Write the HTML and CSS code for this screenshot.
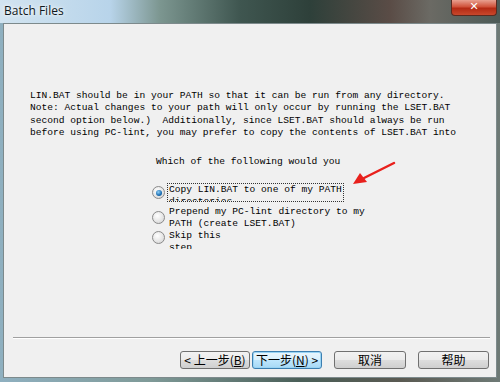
FILE: index.html
```html
<!DOCTYPE html>
<html>

<head>
    <meta charset="UTF-8">
    <title>Batch Files</title>
    <link rel="stylesheet" href="styles.css">
</head>

<body>
    <div class="window">
        <div class="titlebar">
            <span class="title">Batch Files</span>
            <span class="closeBtn">&#x2715;</span>
        </div>
        <div class="client">
            <div class="info">
                LIN.BAT should be in your PATH so that it can be run from any directory.
                <br/> Note: Actual changes to your path will only occur by running the LSET.BAT
                <br/> second option below.)&nbsp; Additionally, since LSET.BAT should always be run
                <br/> before using PC-lint, you may prefer to copy the contents of LSET.BAT into
            </div>
            <div class="question">Which of the following would you</div>
            <div class="options">
                <div class="option opt1">
                    <span class="radio checked"></span>
                    <span class="label focus">Copy LIN.BAT to one of my PATH<br/>directories</span>
                </div>
                <div class="option opt2">
                    <span class="radio"></span>
                    <span class="label">Prepend my PC-lint directory to my<br/>PATH (create LSET.BAT)</span>
                </div>
                <div class="option opt3">
                    <span class="radio"></span>
                    <span class="label">Skip this<br/>step</span>
                </div>
            </div>
            <div class="spacer"></div>
            <div class="separator"></div>
            <div class="buttons">
                <button class="btn back">&lt; 上一步(<u>B</u>)</button>
                <button class="btn next">下一步(<u>N</u>) &gt;</button>
                <button class="btn cancel">取消</button>
                <button class="btn help">帮助</button>
            </div>
            <!-- 红色箭头 -->
            <svg class="arrow" width="50" height="30" viewBox="0 0 50 30">
                <path d="M44 2 L14 17" stroke="#e8201c" stroke-width="2.5" stroke-linecap="round" />
                <path d="M3 23 L10 12 L17 21 Z" fill="#e8201c" />
            </svg>
        </div>
    </div>
</body>

</html>
```

FILE: styles.css
```css
body {
    margin: 0;
    background: #3a4a44;
}

.window {
    width: 500px;
    height: 382px;
    position: relative;
    overflow: hidden;
    background: linear-gradient(90deg, #8fb0c0 0%, #7f9a98 30%, #4a5f58 60%, #5a5a52 80%, #6e7a76 100%);
}

.titlebar {
    height: 23px;
    display: flex;
    align-items: flex-start;
    justify-content: space-between;
    background: linear-gradient(90deg, #d2e4f0 0%, #b8d4ea 22%, #7c9690 32%, #3f5650 48%, #2e403a 62%, #5a4c46 78%, #6b6a64 86%, #4c5a56 100%);
}

.title {
    font-family: "Open Sans", "Liberation Sans", sans-serif;
    font-size: 12px;
    color: #101820;
    padding: 2px 0 0 4px;
    text-shadow: 0 0 6px rgba(255, 255, 255, 0.9), 0 0 3px rgba(255, 255, 255, 0.9);
}

.closeBtn {
    width: 44px;
    height: 15px;
    margin-right: 3px;
    border: 1px solid #5a2a20;
    border-top: none;
    border-radius: 0 0 4px 4px;
    background: linear-gradient(#e8a090 0%, #d0523a 45%, #b42a14 55%, #c8482c 100%);
    color: #fff;
    font-family: "DejaVu Sans", sans-serif;
    font-size: 11px;
    font-weight: bold;
    text-align: center;
    line-height: 14px;
}

.client {
    position: relative;
    height: 353px;
    margin: 0 3px;
    border: 1px solid #7d8a8c;
    background-color: #f0f0f0;
    display: flex;
    flex-direction: column;
    font-family: "Liberation Mono", "DejaVu Sans Mono", monospace;
    font-size: 9.6px;
    color: #000;
}

.info {
    margin: 66px 0 0 26px;
    line-height: 12.3px;
    white-space: nowrap;
}

.question {
    margin: 17px 0 0 152px;
    line-height: 12px;
}

.options {
    margin: 14px 0 0 148px;
}

.option {
    display: flex;
    align-items: flex-start;
}

.opt1 {
    height: 24px;
}

.opt2 {
    height: 24px;
}

.opt3 {
    height: 19px;
    overflow: hidden;
}

.radio {
    width: 11px;
    height: 11px;
    border: 1px solid #8a8a8a;
    border-radius: 50%;
    background: radial-gradient(circle at 40% 35%, #ffffff 0%, #e6e6e6 55%, #cfcfcf 100%);
    margin-top: 5px;
    margin-right: 4px;
    flex-shrink: 0;
    display: flex;
    align-items: center;
    justify-content: center;
}

.opt1 .radio {
    margin-top: 4px;
}

.opt3 .radio {
    margin-top: 1px;
}

.radio.checked::after {
    content: "";
    width: 6px;
    height: 6px;
    border-radius: 50%;
    background: radial-gradient(circle at 40% 35%, #8fd0f8 0%, #1a6cb0 60%, #0c4a8a 100%);
}

.label {
    line-height: 12px;
    white-space: nowrap;
}

.label.focus {
    height: 17px;
    overflow: hidden;
    border: 1px dotted #333;
    padding: 0 1px;
    margin-left: -2px;
}

.opt1 .label {
    margin-top: 1px;
}

.spacer {
    flex: 1;
}

.separator {
    margin: 0 6px 0 9px;
    border-top: 1px solid #a0a0a0;
    border-bottom: 1px solid #ffffff;
}

.buttons {
    display: flex;
    padding: 12px 7px 8px 0;
    justify-content: flex-end;
}

.btn {
    height: 18px;
    padding: 0;
    border: 1px solid #707070;
    border-radius: 3px;
    background: linear-gradient(#f2f2f2 0%, #ebebeb 48%, #dddddd 52%, #cfcfcf 100%);
    font-family: "Noto Sans CJK SC", sans-serif;
    font-size: 12px;
    line-height: 14px;
    color: #000;
}

.btn u {
    text-underline-offset: 1px;
}

.back {
    width: 70px;
}

.next {
    width: 70px;
    margin-left: 2px;
    border-color: #3c7fb1;
    box-shadow: inset 0 0 0 1px #9ad4f4;
    background: linear-gradient(#eaf6fd 0%, #d9f0fc 48%, #bee6fd 52%, #a7d9f5 100%);
}

.cancel {
    width: 72px;
    margin-left: 12px;
}

.help {
    width: 71px;
    margin-left: 12px;
}

.arrow {
    position: absolute;
    left: 346px;
    top: 137px;
}
```
